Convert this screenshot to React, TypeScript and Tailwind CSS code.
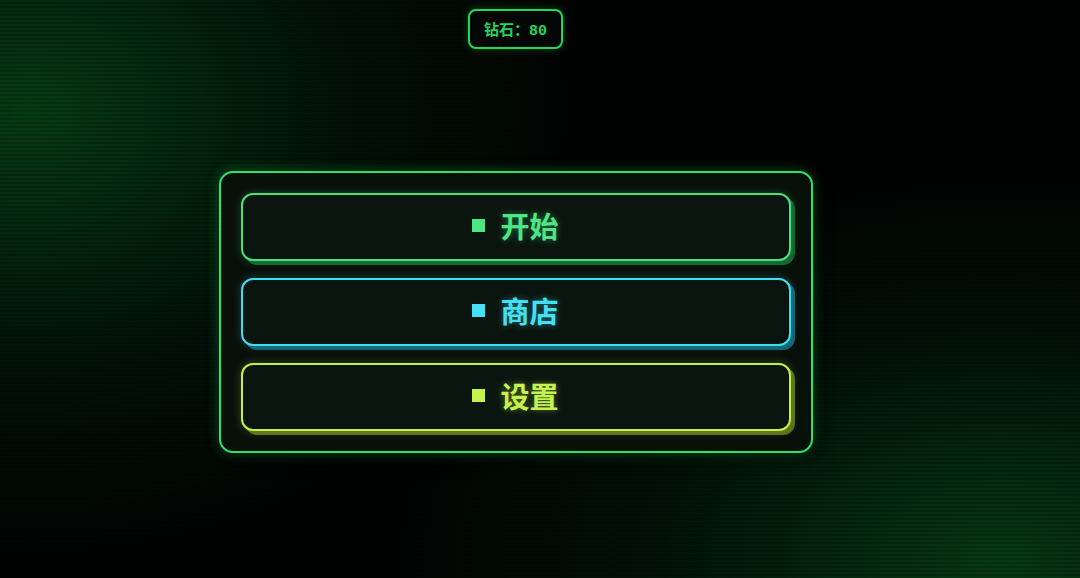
import React from "react";

const buttons = [
  {
    label: "开始",
    cls: "border-[#4ade80] text-[#4ee685] shadow-[4px_4px_0_rgba(34,197,94,0.45),0_0_10px_rgba(74,222,128,0.25)] [text-shadow:0_0_6px_rgba(74,222,128,0.45)]",
    sq: "bg-[#4ee685]",
  },
  {
    label: "商店",
    cls: "border-[#3fdcf2] text-[#45e0f5] shadow-[4px_4px_0_rgba(34,180,210,0.5),0_0_10px_rgba(63,220,242,0.25)] [text-shadow:0_0_6px_rgba(63,220,242,0.45)]",
    sq: "bg-[#45e0f5]",
  },
  {
    label: "设置",
    cls: "border-[#c2ef4a] text-[#c6f24e] shadow-[4px_4px_0_rgba(150,190,40,0.55),0_0_10px_rgba(194,239,74,0.25)] [text-shadow:0_0_6px_rgba(194,239,74,0.45)]",
    sq: "bg-[#c6f24e]",
  },
];

export default function App() {
  return (
    <div
      className="relative w-[1080px] h-[578px] overflow-hidden bg-[#010302] bg-[radial-gradient(ellipse_680px_560px_at_30px_110px,rgba(8,78,28,0.75),rgba(4,42,15,0.38)_45%,transparent_80%),radial-gradient(ellipse_760px_480px_at_1000px_560px,rgba(8,78,28,0.72),rgba(4,42,15,0.38)_45%,transparent_80%)]"
      style={{ fontFamily: '"Noto Sans CJK SC", "Noto Sans", sans-serif' }}
    >
      <div className="pointer-events-none absolute inset-0 bg-[repeating-linear-gradient(to_bottom,rgba(0,0,0,0)_0px,rgba(0,0,0,0)_2px,rgba(0,0,0,0.18)_2px,rgba(0,0,0,0.18)_4px)]" />
      <div className="relative flex flex-col items-center pr-[49px]">
        <div className="mt-[9px] flex h-[40px] w-[95px] items-baseline justify-center rounded-[8px] border-2 border-[#22d65c] bg-[#020604] pt-[7px] text-[15px] font-bold leading-[22px] text-[#22d65c] shadow-[0_0_8px_rgba(34,214,92,0.3)]">
          <span>钻石：</span>
          <span className="font-['Liberation_Mono',monospace]">80</span>
        </div>
        <div className="mt-[122px] flex w-[594px] flex-col gap-[17px] rounded-[14px] border-2 border-[#2be26a] bg-[#08100a] p-[20px] shadow-[0_0_14px_rgba(43,226,106,0.3),6px_6px_16px_rgba(0,0,0,0.7)]">
          {buttons.map((b) => (
            <div
              key={b.label}
              className={`flex h-[68px] items-center justify-center gap-[15px] rounded-[12px] border-2 bg-[#0b150f] pb-[4px] ${b.cls}`}
            >
              <span className={`h-[13px] w-[13px] ${b.sq}`} />
              <span className="text-[29px] font-bold leading-none">{b.label}</span>
            </div>
          ))}
        </div>
      </div>
    </div>
  );
}
